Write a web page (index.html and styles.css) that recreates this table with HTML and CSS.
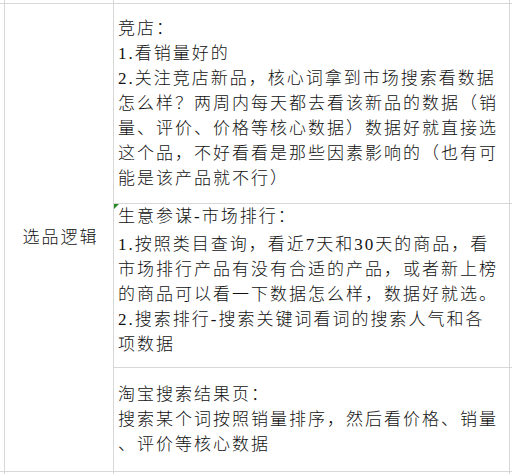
FILE: index.html
```html
<!DOCTYPE html>
<html lang="zh-CN">
<head>
<meta charset="utf-8">
<title>选品逻辑</title>
<link rel="stylesheet" href="styles.css">
</head>
<body>
<div class="sheet">
  <div class="cell edge-top c1"></div>
  <div class="cell edge-top c2"></div>
  <div class="cell edge-top c3"></div>
  <div class="cell edge-top c4"></div>

  <div class="cell margin-left"></div>
  <div class="cell label">选品逻辑</div>

  <div class="cell note r1">
    <p>竞店：<br>1.看销量好的<br>2.关注竞店新品，核心词拿到市场搜索看数据<br>怎么样？两周内每天都去看该新品的数据（销<br>量、评价、价格等核心数据）数据好就直接选<br>这个品，不好看看是那些因素影响的（也有可<br>能是该产品就不行）</p>
  </div>
  <div class="cell c4 r1"></div>

  <div class="cell note r2 top">
    <span class="flag"></span>
    <p><span class="title">生意参谋-市场排行：</span>1.按照类目查询，看近7天和30天的商品，看<br>市场排行产品有没有合适的产品，或者新上榜<br>的商品可以看一下数据怎么样，数据好就选。<br>2.搜索排行-搜索关键词看词的搜索人气和各<br>项数据</p>
  </div>
  <div class="cell c4 r2"></div>

  <div class="cell note r3">
    <p>淘宝搜索结果页：<br>搜索某个词按照销量排序，然后看价格、销量<br>、评价等核心数据</p>
  </div>
  <div class="cell c4 r3"></div>

  <div class="cell edge-bottom c1"></div>
  <div class="cell edge-bottom c2"></div>
  <div class="cell edge-bottom c3"></div>
  <div class="cell edge-bottom c4"></div>
</div>
</body>
</html>
```

FILE: styles.css
```css
html, body {
  margin: 0;
  padding: 0;
  background: #ffffff;
}

.sheet {
  width: 512px;
  height: 474px;
  display: grid;
  grid-template-columns: 4px 108px 395px 1fr;
  grid-template-rows: 3px 199px 163px 103px 1fr;
  gap: 1px;
  background: #d7d7d7;
  font-family: "Liberation Serif", "Noto Sans CJK SC", serif;
  font-size: 17px;
  font-weight: 300;
  letter-spacing: 2px;
  line-height: 25px;
  color: #111111;
}

.cell {
  background: #ffffff;
  min-width: 0;
  min-height: 0;
}

.c1 { grid-column: 1; }
.c2 { grid-column: 2; }
.c3 { grid-column: 3; }
.c4 { grid-column: 4; }

.edge-top { grid-row: 1; }
.edge-bottom { grid-row: 5; }

.r1 { grid-row: 2; }
.r2 { grid-row: 3; }
.r3 { grid-row: 4; }

.margin-left {
  grid-column: 1;
  grid-row: 2 / 5;
}

.label {
  grid-column: 2;
  grid-row: 2 / 5;
  display: flex;
  align-items: center;
  justify-content: center;
  padding-left: 3px;
  white-space: nowrap;
}

.note {
  grid-column: 3;
  display: flex;
  align-items: center;
  padding-left: 4px;
  white-space: nowrap;
  position: relative;
}

.note.top {
  align-items: flex-start;
}

.note p {
  margin: 0;
}

.title {
  display: block;
  margin-bottom: 3px;
}

.flag {
  position: absolute;
  left: 0;
  top: 0;
  width: 0;
  height: 0;
  border-top: 5px solid #2a8a2a;
  border-right: 5px solid transparent;
}
```
